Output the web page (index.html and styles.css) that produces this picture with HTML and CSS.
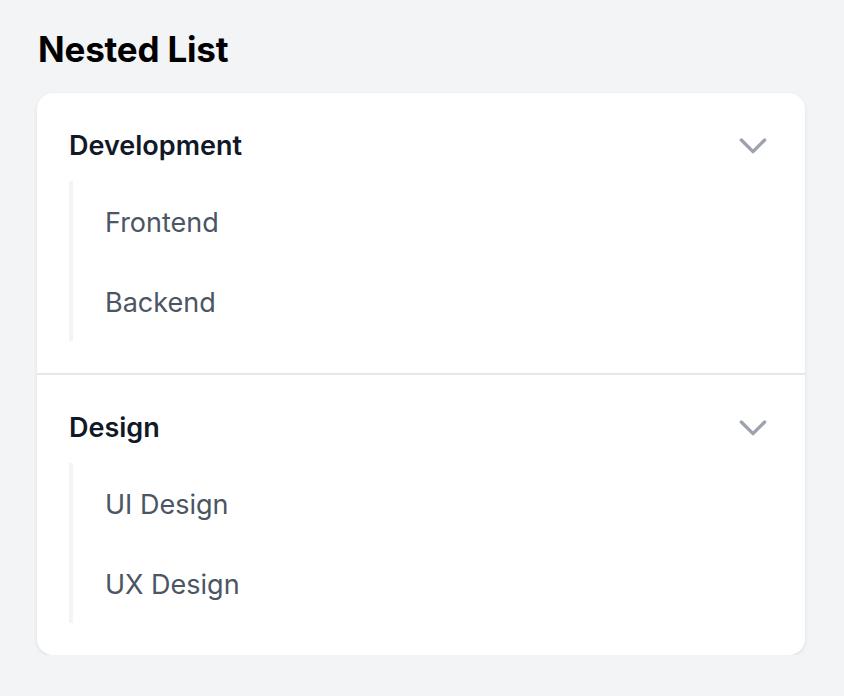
FILE: index.html
```html
<!DOCTYPE html>
<html lang="en">
<head>
<meta charset="utf-8">
<title>Nested List</title>
<link rel="stylesheet" href="styles.css">
</head>
<body>
<div class="wrap">
  <h1 class="title">Nested List</h1>
  <div class="card">
    <section class="group">
      <div class="group-head">
        <span class="group-name">Development</span>
        <svg class="chev" viewBox="0 0 24 24" fill="none" stroke="currentColor" stroke-width="2"><path stroke-linecap="round" stroke-linejoin="round" d="M19 9l-7 7-7-7"/></svg>
      </div>
      <ul class="sub">
        <li class="sub-item">Frontend</li>
        <li class="sub-item">Backend</li>
      </ul>
    </section>
    <section class="group">
      <div class="group-head">
        <span class="group-name">Design</span>
        <svg class="chev" viewBox="0 0 24 24" fill="none" stroke="currentColor" stroke-width="2"><path stroke-linecap="round" stroke-linejoin="round" d="M19 9l-7 7-7-7"/></svg>
      </div>
      <ul class="sub">
        <li class="sub-item">UI Design</li>
        <li class="sub-item">UX Design</li>
      </ul>
    </section>
  </div>
</div>
</body>
</html>
```
FILE: styles.css
```css
html, body {
  margin: 0;
  padding: 0;
  background: #f3f4f6;
  font-family: Inter, "Noto Sans", "Liberation Sans", sans-serif;
}
.wrap {
  width: 768px;
  margin: 0 0 0 37px;
  padding-top: 21px;
}
.title {
  margin: 0 0 16px 1px;
  font-size: 35px;
  line-height: 56px;
  font-weight: 700;
  color: #000;
  letter-spacing: -0.2px;
}
.card {
  background: #fff;
  border-radius: 16px;
  box-shadow: 0 2px 4px rgba(0,0,0,0.07), 0 0 2px rgba(0,0,0,0.04);
  overflow: hidden;
}
.group {
  padding: 32px;
}
.group + .group {
  border-top: 2px solid #e5e7eb;
}
.group-head {
  display: flex;
  align-items: center;
  justify-content: space-between;
  height: 40px;
}
.group-name {
  font-size: 27px;
  line-height: 40px;
  font-weight: 600;
  color: #111827;
  padding-top: 2px;
}
.chev {
  width: 40px;
  height: 40px;
  color: #9ca3af;
}
.sub {
  list-style: none;
  margin: 16px 0 0 0;
  padding: 0;
  border-left: 4px solid #f3f4f6;
}
.sub-item {
  padding: 22px 0 18px 32px;
  font-size: 27px;
  line-height: 40px;
  color: #4b5563;
}
```
